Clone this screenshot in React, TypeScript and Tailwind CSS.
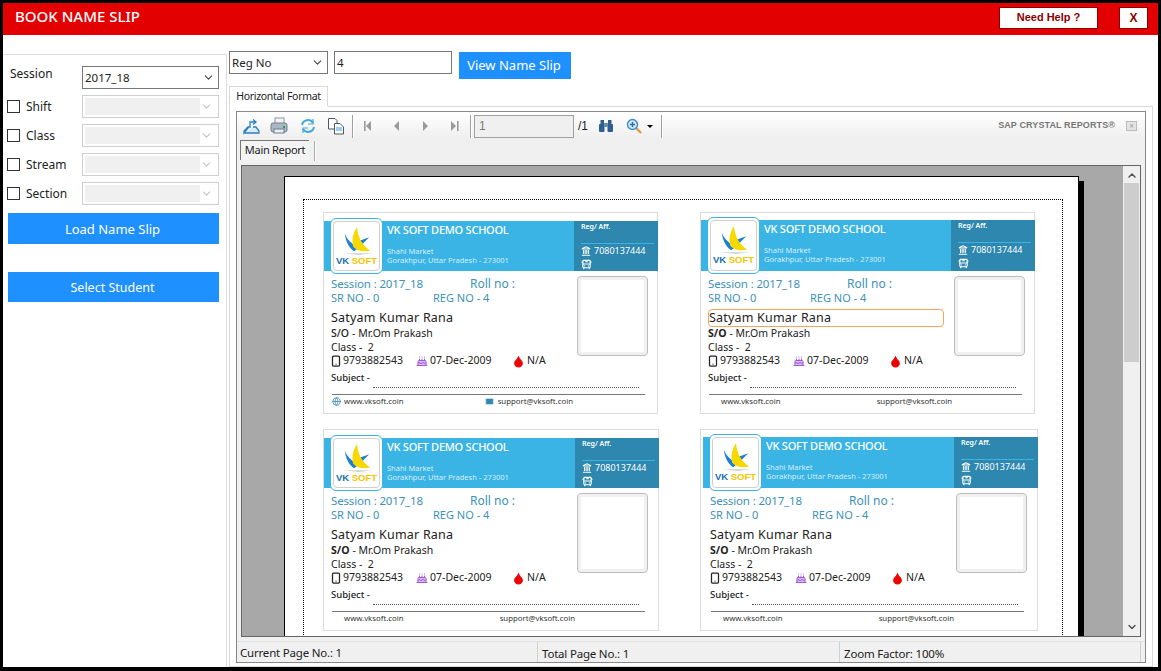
import { BusFront, Cake, ChevronDown, ChevronUp, Droplet, Globe, Landmark, Mail, Smartphone } from "lucide-react";

const sans = "[font-family:'Noto_Sans',sans-serif]";
const arial = "[font-family:'Liberation_Sans',sans-serif]";

function Logo() {
  return (
    <div className="w-[53px] -my-[3px] shrink-0 rounded-[6px] border border-[#3ab4e4] bg-white p-[2px]">
      <div className="flex h-full flex-col items-center rounded-[4px] border border-[#cfcfcf] bg-white">
        <svg viewBox="0 0 44 34" className="mt-[3px] h-[32px] w-[44px]">
          <path d="M9 9 C12 17 18 21 24 24 L19 28 C13 24 10 17 9 9Z" fill="#1c7fd6" />
          <path d="M35 13 L26 22 L24 17 Z" fill="#1c7fd6" />
          <path d="M22 2 C23 13 27 21 36 27 C28 29 21 27 18 23 C16 16 18 8 22 2Z" fill="#f7d800" />
          <path d="M8 30 H38 L24 32Z" fill="#cfcfcf" />
        </svg>
        <div className={`${arial} -mt-[2px] text-[9.5px] leading-[12px] font-bold whitespace-nowrap`}>
          <span className="text-[#1a6fb0]">VK </span>
          <span className="text-[#f2c500]">SOFT</span>
        </div>
      </div>
    </div>
  );
}

function Card({
  width,
  band,
  footerIcons,
  highlight,
  boldSo,
  supportLeft,
}: {
  width: string;
  band: string;
  footerIcons?: boolean;
  highlight?: boolean;
  boldSo?: boolean;
  supportLeft: string;
}) {
  return (
    <div className={`${width} ${sans} h-[202px] shrink-0 border border-[#dcdcdc] bg-white text-[#222]`}>
      <div className={`${band} flex -mr-[1px] bg-[#3ab4e4] pl-[6px]`}>
        <Logo />
        <div className="flex min-w-0 flex-1 flex-col pl-[4px] text-white">
          <div className="mt-[1px] text-[11px] leading-[15px] font-medium whitespace-nowrap tracking-[-0.25px]">VK SOFT DEMO SCHOOL</div>
          <div className="mt-[10px] text-[7.5px] leading-[9px] text-[#d5eef9]">Shahi Market</div>
          <div className="text-[7.5px] leading-[9px] text-[#d5eef9] whitespace-nowrap">Gorakhpur, Uttar Pradesh - 273001</div>
        </div>
        <div className="w-[84px] shrink-0 bg-[#2d87ae] pl-[7px] text-white">
          <div className="mt-[1px] text-[7px] leading-[10px] font-semibold">Reg/ Aff.</div>
          <div className="mt-[11px] mr-[4px] border-t border-[#3ab4e4]" />
          <div className="flex h-[14px] items-center gap-[3px] text-[9px] leading-[14px]">
            <Landmark size={10} strokeWidth={2.5} />
            <span>7080137444</span>
          </div>
          <BusFront size={11} strokeWidth={2.5} className="mt-[1px]" />
        </div>
      </div>
      <div className="flex h-[96px]">
        <div className="w-[253px] shrink-0 pl-[7px]">
          <div className="mt-[5px] flex h-[15px] items-center text-[#3d92b8]">
            <span className="w-[139px] text-[11.5px] tracking-[-0.15px] whitespace-nowrap">Session : 2017_18</span>
            <span className="text-[12px] whitespace-nowrap">Roll no :</span>
          </div>
          <div className="flex h-[14px] items-center text-[11px] text-[#3d92b8]">
            <span className="w-[102px] whitespace-nowrap">SR NO - 0</span>
            <span className="whitespace-nowrap">REG NO - 4</span>
          </div>
          <div className={`mt-[4px] flex h-[18px] w-[236px] items-center text-[12.5px] tracking-[0.2px] ${highlight ? "rounded-[4px] border border-[#f5a65b]" : ""}`}>Satyam Kumar Rana</div>
          <div className="flex h-[14px] items-center text-[10.5px] whitespace-nowrap">
            <span className={boldSo ? "font-bold" : "font-medium"}>S/O</span>
            <span className="ml-[3px]">- Mr.Om Prakash</span>
          </div>
          <div className="h-[13px] text-[10.5px] leading-[12px]">Class -&nbsp; 2</div>
          <div className="flex h-[14px] items-center text-[10.5px] whitespace-nowrap">
            <Smartphone size={12} strokeWidth={2.5} className="-ml-[1px]" />
            <span className="ml-[1px] w-[73px]">9793882543</span>
            <Cake size={12} fill="#d9bdf0" className="text-[#a259d9]" />
            <span className="ml-[2px] w-[82px]">07-Dec-2009</span>
            <Droplet size={13} fill="#ee0000" className="text-[#ee0000]" />
            <span className="ml-[2px]">N/A</span>
          </div>
        </div>
        <div className="mt-[5px] h-[80px] w-[71px] rounded-[4px] border border-[#bdbdbd] bg-white shadow-[inset_0_0_0_3px_#f0f0f0]" />
      </div>
      <div className="mt-[4px] h-[14px] pl-[7px] text-[9.5px] leading-[14px] font-medium">Subject -</div>
      <div className="mt-[2px] ml-[49px] w-[266px] border-t border-dotted border-[#555]" />
      <div className="mt-[6px] ml-[8px] w-[313px] border-t border-[#777]" />
      <div className="flex h-[13px] items-center text-[7.8px] whitespace-nowrap text-[#333]">
        <span className="ml-[8px] flex w-[12px] items-center">{footerIcons ? <Globe size={9} className="text-[#2d87ae]" /> : null}</span>
        <span>www.vksoft.coin</span>
        <span className={`${supportLeft} flex items-center`}>
          {footerIcons ? <Mail size={9} fill="#2d87ae" className="mr-[4px] text-[#cfe6f0]" /> : null}
          support@vksoft.coin
        </span>
      </div>
    </div>
  );
}

function Select({ value, disabled }: { value?: string; disabled?: boolean }) {
  return (
    <div className={`flex h-[23px] w-[137px] items-center border ${disabled ? "border-[#cfcfcf] p-[2px]" : "border-[#777]"}`}>
      {disabled ? <div className="h-full w-[115px] bg-[#f0f0f0]" /> : <span className="pl-[2px] text-[11.5px]">{value}</span>}
      <ChevronDown size={13} className={`mr-[3px] ml-auto ${disabled ? "text-[#c4c4c4]" : "text-[#444]"}`} />
    </div>
  );
}

function FilterRow({ label }: { label: string }) {
  return (
    <div className="flex h-[23px] items-center">
      <div className="h-[13px] w-[13px] border border-[#333] bg-white" />
      <span className="ml-[6px] w-[56px] text-[12px]">{label}</span>
      <Select disabled />
    </div>
  );
}

function Sep({ className }: { className: string }) {
  return <div className={`${className} h-[23px] w-[2px] shrink-0 border-l border-[#a0a0a0] bg-white`} />;
}

function NavArrow({ dir, bar, className }: { dir: "left" | "right"; bar?: boolean; className: string }) {
  const tri = dir === "left" ? "M9 2 L4 7 L9 12Z" : "M4 2 L9 7 L4 12Z";
  const x = dir === "left" ? 2 : 10;
  return (
    <svg viewBox="0 0 12 14" className={`${className} h-[14px] w-[12px] shrink-0`}>
      <path d={tri} fill="#9a9a9a" />
      {bar ? <rect x={x} y="2" width="1.6" height="10" fill="#9a9a9a" /> : null}
    </svg>
  );
}

function Toolbar() {
  return (
    <div className="flex h-[28px] items-center bg-gradient-to-b from-white to-[#eeeeee]">
      <svg viewBox="0 0 18 18" className="ml-[6px] h-[18px] w-[18px] shrink-0" fill="none" stroke="#2c7fc4" strokeWidth="1.3">
        <path d="M1 16 H16 V14 L13 10 H10 M6 10 H5 L1 14 V16Z" fill="#d6ebfa" />
        <path d="M7 11 V5 H12 M10 2.5 L13 5 L10 7.5" />
      </svg>
      <svg viewBox="0 0 18 18" className="ml-[9px] h-[18px] w-[18px] shrink-0">
        <rect x="5" y="1" width="9" height="6" fill="#f4f4f4" stroke="#8a97a5" />
        <rect x="1" y="6" width="16" height="9" rx="2" fill="#aab7c4" stroke="#6f7f8f" />
        <rect x="4" y="12" width="10" height="4" fill="#e8eef3" stroke="#6f7f8f" />
        <rect x="13" y="9" width="2" height="2" fill="#2aa34a" />
      </svg>
      <svg viewBox="0 0 16 16" className="ml-[12px] h-[16px] w-[16px] shrink-0" fill="none" stroke="#45a9d8" strokeWidth="2">
        <path d="M2 7 A6 6 0 0 1 13 5 M14 9 A6 6 0 0 1 3 11" />
        <path d="M13 1 V6 H8 M3 15 V10 H8" strokeWidth="1.2" />
      </svg>
      <svg viewBox="0 0 18 18" className="ml-[11px] h-[18px] w-[18px] shrink-0" fill="#fff" stroke="#4a5a68">
        <path d="M1.5 1.5 H8 L10 3.5 V12 H1.5Z" />
        <path d="M7.5 6.5 H13 L16.5 10 V17 H7.5Z" />
        <path d="M9 11 H15 M9 13 H15" stroke="#3a9ad9" />
      </svg>
      <Sep className="ml-[7px]" />
      <NavArrow dir="left" bar className="ml-[8px]" />
      <NavArrow dir="left" className="ml-[16px]" />
      <NavArrow dir="right" className="ml-[17px]" />
      <NavArrow dir="right" bar className="ml-[16px]" />
      <Sep className="ml-[11px]" />
      <div className={`${arial} ml-[2px] flex h-[23px] w-[100px] shrink-0 items-center border border-[#a0a0a0] bg-[#f0f0f0] pl-[4px] text-[12px] text-[#777]`}>1</div>
      <span className={`${arial} ml-[4px] text-[12px] text-[#222]`}>/1</span>
      <svg viewBox="0 0 16 14" className="ml-[10px] h-[14px] w-[16px] shrink-0" fill="#2f5f8f">
        <rect x="1" y="5" width="5.5" height="8" rx="1" />
        <rect x="9.5" y="5" width="5.5" height="8" rx="1" />
        <rect x="2.5" y="1" width="3.5" height="5" />
        <rect x="10" y="1" width="3.5" height="5" />
        <rect x="6" y="4" width="4" height="4" fill="#6a8fb0" />
      </svg>
      <svg viewBox="0 0 16 16" className="ml-[12px] h-[16px] w-[16px] shrink-0">
        <path d="M10 10 L15 15" stroke="#e09a3a" strokeWidth="2.4" />
        <circle cx="6.5" cy="6.5" r="5" fill="#cfe6f7" stroke="#3f8fc9" strokeWidth="1.4" />
        <path d="M4 6.5 H9 M6.5 4 V9" stroke="#2f6fa8" strokeWidth="1.4" />
      </svg>
      <div className="ml-[5px] h-0 w-0 border-x-[3px] border-t-[3px] border-x-transparent border-t-black" />
      <Sep className="ml-[8px]" />
      <span className={`${arial} ml-auto text-[9px] font-bold tracking-[0.1px] whitespace-nowrap text-[#777]`}>SAP CRYSTAL REPORTS®</span>
      <div className="mr-[8px] ml-[11px] flex h-[10px] w-[11px] items-center justify-center border border-[#bbb] bg-[#e4e4e4] text-[8px] leading-none text-[#999]">×</div>
    </div>
  );
}

export default function App() {
  return (
    <div className={`${sans} flex h-[671px] w-[1161px] flex-col overflow-hidden bg-black pt-[3px] pr-[3px] pb-[4px] pl-[3px] text-[#222]`}>
      <header className="flex h-[32px] shrink-0 items-center bg-[#e30000] pr-[10px] pl-[12px]">
        <h1 className="-mt-[6px] text-[15px] leading-none font-medium text-white">BOOK NAME SLIP</h1>
        <button className={`${arial} mt-[-3px] ml-auto h-[22px] w-[99px] border border-[#8b0000] bg-white text-[11px] font-bold text-[#8b0000]`}>Need Help ?</button>
        <button className={`${arial} mt-[-3px] ml-[21px] h-[22px] w-[29px] border border-[#8b0000] bg-white text-[12px] font-bold text-[#8b0000]`}>X</button>
      </header>
      <div className="flex min-h-0 flex-1 bg-white">
        <aside className="mt-[19px] w-[224px] shrink-0 border-t border-r border-[#dcdcdc] pt-[11px] pr-[7px] pl-[4px]">
          <div className="flex h-[23px] items-center">
            <span className="w-[75px] pb-[8px] pl-[3px] text-[12px]">Session</span>
            <Select value="2017_18" />
          </div>
          <div className="mt-[6px] flex flex-col gap-[6px]">
            <FilterRow label="Shift" />
            <FilterRow label="Class" />
            <FilterRow label="Stream" />
            <FilterRow label="Section" />
          </div>
          <button className="mt-[8px] ml-[1px] h-[31px] w-[211px] bg-[#1e90ff] pt-[2px] pr-[2px] text-[13px] text-white">Load Name Slip</button>
          <button className="mt-[28px] ml-[1px] h-[30px] w-[211px] bg-[#1e90ff] pt-[2px] pr-[2px] text-[12.5px] text-white">Select Student</button>
        </aside>
        <main className="flex min-w-0 flex-1 flex-col pt-[16px] pl-[2px]">
          <div className="flex h-[28px] shrink-0 items-start">
            <div className="flex h-[23px] w-[99px] items-center border border-[#777] pl-[2px] text-[11.5px]">
              Reg No
              <ChevronDown size={13} className="mr-[3px] ml-auto text-[#444]" />
            </div>
            <div className="ml-[6px] flex h-[23px] w-[118px] items-center border border-[#777] pl-[2px] text-[11.5px]">4</div>
            <button className="mt-[1px] ml-[7px] h-[27px] w-[112px] bg-[#1e90ff] pt-[1px] pr-[2px] text-[13px] text-white">View Name Slip</button>
          </div>
          <div className="z-10 mt-[7px] -mb-[1px] flex h-[21px] w-[99px] shrink-0 items-center justify-center border border-b-white border-[#d9d9d9] bg-white text-[10.5px] tracking-[-0.3px]">Horizontal Format</div>
          <div className="mr-[5px] min-h-0 flex-1 border border-[#d9d9d9] pt-[4px] pr-[6px] pb-[3px] pl-[6px]">
            <div className="flex h-full flex-col border border-[#888] bg-[#f0f0f0]">
              <Toolbar />
              <div className="flex h-[25px] shrink-0 items-start pl-[3px]">
                <div className="flex h-[20px] w-[69px] items-center justify-center border-t border-l border-[#777] bg-[#f4f4f4] text-[11px] tracking-[-0.3px]">Main Report</div>
                <div className="mt-[1px] ml-[5px] h-[20px] w-[2px] border-l border-[#aaa] bg-white" />
              </div>
              <div className="mx-[4px] flex min-h-0 flex-1 overflow-hidden border border-[#666] bg-[#a8a8a8]">
                <div className="min-w-0 flex-1 overflow-hidden pt-[10px] pl-[42px]">
                  <div className="h-[600px] w-[795px] border border-black bg-white pt-[22px] pl-[18px] shadow-[5px_5px_0_#000]">
                    <div className="h-[600px] w-[760px] border border-dotted border-black pt-[12px] pl-[19px]">
                      <div className="flex gap-[42px]">
                        <Card width="w-[335px]" band="mt-[8px] h-[50px]" footerIcons supportLeft="ml-[81px]" />
                        <Card width="w-[335px]" band="mt-[7px] h-[51px]" highlight boldSo supportLeft="ml-[96px]" />
                      </div>
                      <div className="mt-[15px] flex gap-[41px]">
                        <Card width="w-[336px]" band="mt-[8px] h-[50px]" boldSo supportLeft="ml-[96px]" />
                        <Card width="w-[338px] pl-[2px]" band="mt-[7px] h-[51px]" boldSo supportLeft="ml-[96px]" />
                      </div>
                    </div>
                  </div>
                </div>
                <div className="flex w-[17px] shrink-0 flex-col items-center bg-[#f0f0f0]">
                  <ChevronUp size={12} strokeWidth={3} className="mt-[3px] h-[13px] shrink-0 text-[#555]" />
                  <div className="mt-[1px] h-[179px] w-[15px] shrink-0 bg-[#cdcdcd]" />
                  <ChevronDown size={12} strokeWidth={3} className="mt-auto mb-[3px] text-[#555]" />
                </div>
              </div>
              <div className="mt-[4px] flex h-[21px] shrink-0 items-center border-t border-[#e0e0e0] text-[11.5px] tracking-[-0.2px]">
                <div className="w-[300px] pt-[2px] pl-[3px]">Current Page No.: 1</div>
                <div className="h-full w-[302px] border-l border-[#d0d0d0] pl-[4px] leading-[23px]">Total Page No.: 1</div>
                <div className="h-full w-[302px] border-x border-[#d0d0d0] pl-[4px] leading-[23px]">Zoom Factor: 100%</div>
              </div>
            </div>
          </div>
        </main>
      </div>
    </div>
  );
}
